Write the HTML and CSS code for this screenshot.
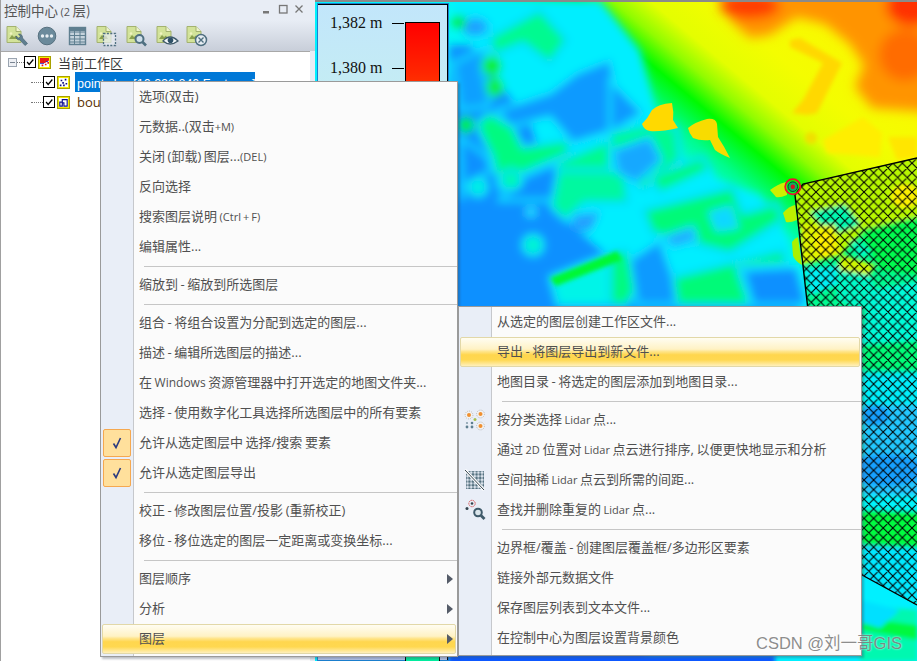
FILE: index.html
```html
<!DOCTYPE html>
<html>
<head>
    <meta charset="UTF-8">
    <title>控制中心</title>
    <link rel="stylesheet" href="styles.css">
</head>
<body>
<svg class="defs" width="0" height="0">
    <defs>
        <symbol id="doc" viewBox="0 0 30 24">
            <path d="M5 2.500h9l5 5v11H5z" fill="#d3e39a" stroke="#a3b26f"/>
            <path d="M14 2.500v5h5" fill="#eef4cc" stroke="#a3b26f"/>
            <path d="M7 15l3-4 2 2 2-1.500 2 3.500z" fill="#8aa04e"/>
            <circle cx="9" cy="9.500" r="1.300" fill="#f0f4c0"/>
        </symbol>
    </defs>
</svg>

<div class="panel">
    <div class="panel-title">
        <span class="panel-name">控制中心 <small>(2</small> 层)</span>
        <span class="win-btns">
            <svg width="50" height="12" viewBox="0 0 50 12">
                <rect x="3" y="7" width="6" height="2.500" fill="#777"/>
                <rect x="19.500" y="1.500" width="7.500" height="7.500" fill="none" stroke="#777" stroke-width="1.300"/>
                <path d="M35.500 1.500l7 7M42.500 1.500l-7 7" stroke="#777" stroke-width="1.300"/>
            </svg>
        </span>
    </div>
    <div class="toolbar">
        <svg class="tool" viewBox="0 0 30 24"><use href="#doc"/><path d="M14 12a3.500 3.500 0 0 0 4 4l5 5.500 2.500-2-5-5.500a3.500 3.500 0 0 0-4-4l2 2.500-2 1.500z" fill="#5f7f90" stroke="#3f5a6a" stroke-width=".6"/></svg>
        <svg class="tool" viewBox="0 0 30 24"><circle cx="15" cy="12" r="8.800" fill="#6b8a9b" stroke="#56707f"/><circle cx="10.500" cy="12" r="1.700" fill="#e8eef2"/><circle cx="15" cy="12" r="1.700" fill="#e8eef2"/><circle cx="19.500" cy="12" r="1.700" fill="#e8eef2"/></svg>
        <svg class="tool" viewBox="0 0 30 24"><rect x="7.500" y="3.500" width="16" height="17" fill="#c5d3dc" stroke="#5f7f90" stroke-width="1.400"/><path d="M8 8h15M8 11.500h15M8 15h15M8 18h15M12.500 7v13M18 7v13" stroke="#5f7f90"/><rect x="8" y="4" width="15" height="3" fill="#5f7f90"/></svg>
        <svg class="tool" viewBox="0 0 30 24"><use href="#doc"/><rect x="11.500" y="9.500" width="12" height="12" fill="#e8ecf2" fill-opacity=".7" stroke="#4f6f80" stroke-width="1.300" stroke-dasharray="2 1.400"/></svg>
        <svg class="tool" viewBox="0 0 30 24"><use href="#doc"/><circle cx="17.500" cy="15" r="4" fill="#cfe0ea" stroke="#4f6f80" stroke-width="2"/><path d="M20.500 18l3.500 3.500" stroke="#4f6f80" stroke-width="2.600"/></svg>
        <svg class="tool" viewBox="0 0 30 24"><use href="#doc"/><path d="M11 17q7-8 15 0q-8 6-15 0z" fill="#f4f8fa" stroke="#3f5a6a" stroke-width="1.300"/><circle cx="18.500" cy="16.300" r="2.800" fill="#2f5168"/></svg>
        <svg class="tool" viewBox="0 0 30 24"><use href="#doc"/><circle cx="19" cy="16" r="5.500" fill="#e6edf2" stroke="#4f6f80" stroke-width="1.500"/><path d="M16.500 13.500l5 5M21.500 13.500l-5 5" stroke="#4f6f80" stroke-width="1.400"/></svg>
    </div>
    <div class="tree">
        <div class="tree-row">
            <span class="expander"></span>
            <span class="dots-h short"></span>
            <span class="check"><svg width="12" height="12" viewBox="0 0 12 12"><path d="M2.500 6l2.500 3 5-6" fill="none" stroke="#000" stroke-width="1.500"/></svg></span>
            <span class="layer-icon">
                <svg viewBox="0 0 11 11"><rect width="11" height="11" fill="#fff"/><path d="M0 0h11v3L6 6H0z" fill="#e81818"/><path d="M6 7h2v2H6zM9 5h2v2H9zM2 8h2v2H2z" fill="#e81818"/><path d="M0 6h5v1H0zM7 4h3v1H7z" fill="#1818c8"/></svg>
            </span>
            <span class="tree-text first">当前工作区</span>
        </div>
        <div class="tree-row child">
            <span class="dots-h"></span>
            <span class="check"><svg width="12" height="12" viewBox="0 0 12 12"><path d="M2.500 6l2.500 3 5-6" fill="none" stroke="#000" stroke-width="1.500"/></svg></span>
            <span class="layer-icon">
                <svg viewBox="0 0 11 11"><rect width="11" height="11" fill="#fff"/><path d="M2 2h2v2H2zM7 1h2v2H7zM4 5h2v2H4zM8 6h2v2H8zM1 8h2v2H1zM5 8h2v2H5z" fill="#101080"/></svg>
            </span>
            <span class="tree-text selected">points.las [10,222,240 Features]</span>
        </div>
        <div class="tree-row child">
            <span class="dots-h"></span>
            <span class="check"><svg width="12" height="12" viewBox="0 0 12 12"><path d="M2.500 6l2.500 3 5-6" fill="none" stroke="#000" stroke-width="1.500"/></svg></span>
            <span class="layer-icon">
                <svg viewBox="0 0 11 11"><rect width="11" height="11" fill="#fff"/><path d="M1 10V5h3V2h6v8H6V6H4v4z" fill="none" stroke="#101090" stroke-width="1.400"/></svg>
            </span>
            <span class="tree-text">boundary</span>
        </div>
    </div>
</div>

<div class="map">
    <svg class="map-art" viewBox="315 0 602 661" width="602" height="661">
        <defs>
            <linearGradient id="slope" gradientUnits="userSpaceOnUse" x1="572" y1="259" x2="828" y2="-49">
                <stop offset="0" stop-color="#00f0ff"/>
                <stop offset=".34" stop-color="#00fbf0"/>
                <stop offset=".42" stop-color="#00fc90"/>
                <stop offset=".5" stop-color="#00fa00"/>
                <stop offset=".56" stop-color="#90fc00"/>
                <stop offset=".62" stop-color="#e4fe00"/>
                <stop offset=".72" stop-color="#f4fd00"/>
                <stop offset="1" stop-color="#fff400"/>
            </linearGradient>
            <pattern id="hatch" patternUnits="userSpaceOnUse" width="9.600" height="9.600">
                <path d="M0 9.600L9.600 0M-1 1L1 -1M8.600 10.600L10.600 8.600M0 0L9.600 9.600M-1 8.600L1 10.600M8.600 -1L10.600 1" stroke="#000" stroke-width="1.100"/>
            </pattern>
            <filter id="soft" x="-10%" y="-10%" width="120%" height="120%"><feGaussianBlur stdDeviation="4"/></filter>
            <filter id="crisp" x="-10%" y="-10%" width="120%" height="120%"><feGaussianBlur stdDeviation="2"/></filter>
            <filter id="softer" x="-30%" y="-30%" width="160%" height="160%"><feGaussianBlur stdDeviation="6"/></filter>
            <filter id="edge" x="-10%" y="-10%" width="120%" height="120%"><feGaussianBlur stdDeviation=".5"/></filter>
        </defs>

        <rect x="315" y="0" width="602" height="661" fill="url(#slope)"/>

        <g filter="url(#softer)">
            <path d="M712 -15L732 22L750 38L770 35L797 17L825 24L850 44L864 65L855 87L872 108L930 112L930 -15z" fill="#ff9400"/>
            <ellipse cx="750" cy="6" rx="30" ry="13" fill="#ff3c00"/>
            <ellipse cx="912" cy="6" rx="26" ry="20" fill="#ff3000"/>
            <ellipse cx="905" cy="55" rx="26" ry="26" fill="#ff6c00"/>
            <path d="M600 60L650 125L600 145z" fill="#0a90ff"/>
        </g>

        <g filter="url(#soft)" stroke="#10dcff" stroke-width="4">
            <path d="M449 45L610 45L650 130L700 250L760 270L800 310L640 670L449 670z" fill="#0f90ff" stroke="none"/>
            <path d="M449 0H600L640 50L660 125L690 170L760 195L790 240L790 262L650 290L560 215L530 120L480 60z" fill="#00eeff" stroke="none"/>
            <ellipse cx="475" cy="27" rx="14" ry="10" fill="#1aa0ff"/>
            <path d="M490 37L540 10L567 40L550 63L523 43L493 55z" fill="#00fa90"/>
            <path d="M453 63L487 47L482 67L490 100L487 107L460 110z" fill="#0fa0ff"/>
            <path d="M497 110L550 93L577 73L610 60L625 127L573 143L550 117L510 127z" fill="#0f9aff"/>
            <path d="M610 80L643 113L610 133z" fill="#0f9aff"/>
            <ellipse cx="492" cy="66" rx="10" ry="10" fill="#10f030" stroke="none"/>
            <ellipse cx="495" cy="87" rx="9" ry="10" fill="#10f040" stroke="none"/>
            <circle cx="459" cy="22" r="7" fill="#00f040" stroke="none"/>
            <path d="M477 123L490 113L513 127L523 147L567 140L570 153L523 173L520 183L500 190L492 157L480 133z" fill="#00fa80"/>
            <circle cx="466" cy="125" r="8" fill="#00f030" stroke="none"/>
            <path d="M460 137L487 157L492 170L463 187L463 200z" fill="#1090ff"/>
            <path d="M523 177L557 163L560 200L500 200z" fill="#1090ff"/>
            <path d="M555 163L610 140L610 200L563 200z" fill="#00fa90"/>
            <circle cx="478" cy="187" r="9" fill="#00f0e0"/>
            <ellipse cx="511" cy="180" rx="11" ry="10" fill="#00f8b0"/>
            <circle cx="531" cy="212" r="6" fill="#20d8ff" stroke="none"/>
            <circle cx="533" cy="245" r="10" fill="#00f4d0"/>
            <path d="M558 170L625 170L628 203L585 203L565 220L551 207z" fill="#00f8a0"/>
            <path d="M575 215L600 212L590 232L570 228z" fill="#20a0ff" stroke="none"/>
            <path d="M550 277L618 250L628 267L628 305L558 305z" fill="#00f4e8"/>
            <path d="M610 253L627 250L637 287L627 305L610 305z" fill="#00fa80"/>
            <path d="M610 133L653 123L677 127L680 160L643 190L610 160z" fill="#00fa90"/>
            <path d="M613 150L650 137L662 160L637 183L617 173z" fill="#18a8ff"/>
            <path d="M650 177L703 157L710 170L660 193z" fill="#00fa80"/>
            <path d="M660 193L710 170L720 183L670 207z" fill="#00eeff" stroke="none"/>
            <path d="M643 210L733 187L743 213L777 203L783 220L730 253L652 233z" fill="#00fa78"/>
            <path d="M710 213L730 207L737 227L717 230z" fill="#10d8ff"/>
            <path d="M663 237L693 227L697 240L673 248z" fill="#20a8ff"/>
            <path d="M630 260L660 240L673 277L677 305L637 305z" fill="#0f9aff"/>
            <path d="M673 277L783 250L787 263L737 267L750 305L677 305z" fill="#00fa78"/>
            <path d="M743 270L797 267L807 305L753 305z" fill="#0f90ff"/>
        </g>

        <path d="M550 278L617 251L622 260L556 286z" fill="#00f830" filter="url(#crisp)"/>

        <g filter="url(#crisp)">
            <path d="M790 40L800 38L842 63L817 113L807 115L792 113L803 100L823 63L790 47z" fill="#ffd800"/>
            <path d="M823 140L863 117L882 133L880 157L827 153z" fill="#ffee00"/>
            <path d="M888 137L917 137L917 157L897 160z" fill="#ffe600"/>
            <circle cx="811" cy="138" r="6" fill="#f0e000"/>
        </g>

        <!-- polygon contents under the hatch -->
        <clipPath id="boundary"><path d="M803 184L925 156L925 610L862 575L808 310L795 195z"/></clipPath>
        <g clip-path="url(#boundary)">
            <rect x="790" y="150" width="135" height="470" fill="#00fa90"/>
            <g filter="url(#crisp)">
                <path d="M795 180L925 150L925 215L860 235L840 255L795 225z" fill="#b8f800"/>
                <ellipse cx="905" cy="196" rx="14" ry="12" fill="#fcf000"/>
                <path d="M810 212L845 205L860 225L830 235z" fill="#00f8b0"/>
                <path d="M800 225L835 225L842 255L800 265z" fill="#e0f400"/>
                <ellipse cx="825" cy="243" rx="10" ry="13" fill="#fff000"/>
                <path d="M842 255L875 265L862 290L835 270z" fill="#d0f400"/>
                <path d="M803 268L840 266L838 285L810 295z" fill="#00f0f4"/>
                <path d="M835 270L870 275L880 300L860 310L838 300z" fill="#00fac8"/>
                <path d="M860 230L925 215L925 275L880 270z" fill="#00fc50"/>
                <path d="M850 240L872 250L860 258z" fill="#00f8c8"/>
                <path d="M870 290L925 280L925 350L860 345z" fill="#00fad8"/>
                <path d="M862 345L925 340L925 370L862 368z" fill="#00fc78"/>
                <path d="M862 372L925 372L925 405L862 405z" fill="#00f0fc"/>
                <path d="M862 405L925 405L925 600L862 600z" fill="#20c8ff"/>
                <ellipse cx="885" cy="470" rx="40" ry="16" fill="#18a0ff"/>
                <ellipse cx="875" cy="415" rx="14" ry="10" fill="#18a0ff"/>
                <path d="M862 495L925 495L925 512L862 512z" fill="#00f4fc"/>
                <path d="M862 510L925 512L925 548L862 545z" fill="#00fc40"/>
                <path d="M862 548L925 548L925 610L862 575z" fill="#00e8ff"/>
            </g>
            <rect x="790" y="150" width="135" height="470" fill="url(#hatch)"/>
        </g>
        <path d="M917 158L803 184L795 195L808 310M862 575L917 605" fill="none" stroke="#000" stroke-width="1.400"/>

        <g filter="url(#crisp)">
            <path d="M862 605L917 610V661H860z" fill="#00f8b0"/>
            <path d="M862 618L917 625V640L862 630z" fill="#00f840"/>
            <path d="M860 600L900 610L880 628L860 622z" fill="#00e0ff"/>
            <path d="M449 655H775V670H449z" fill="#0858ff"/>
        </g>

        <g filter="url(#edge)">
            <path d="M642 124Q648 118 652 110Q658 104 672 103Q674 112 673 120L678 128Q660 132 650 131Q644 130 642 124z" fill="#ffd900"/>
            <path d="M688 128Q695 122 707 119Q716 118 717 124L718 137Q724 146 730 158Q720 154 715 150L710 140Q700 141 693 138Q689 133 688 128z" fill="#f8dc00"/>
            <path d="M770 190Q778 184 786 182L787 195Q780 198 776 197z" fill="#ccf000"/>
            <path d="M783 213Q789 206 795 205L797 220Q790 223 786 222z" fill="#bcf000"/>
            <path d="M792 242Q795 238 798 237L802 265Q796 262 793 256z" fill="#aaf000"/>
        </g>

        <g fill="none">
            <circle cx="792.800" cy="186.700" r="7.600" stroke="#f01030" stroke-width="1.800"/>
            <circle cx="792.800" cy="186.700" r="4.800" fill="#10b060" stroke="#104030" stroke-width="1"/>
            <circle cx="792.800" cy="186.700" r="2.200" fill="#d81020"/>
        </g>
    </svg>
    <div class="legend">
        <div class="legend-row"><span class="legend-label">1,382 m</span><span class="legend-tick"></span></div>
        <div class="legend-row"><span class="legend-label">1,380 m</span><span class="legend-tick"></span></div>
        <div class="legend-bar"></div>
    </div>
</div>

<div class="menu main-menu">
    <div class="item"><span class="gutter"></span><span class="label">选项(双击)</span></div>
    <div class="item"><span class="gutter"></span><span class="label">元数据..(双击<span class="sm">+M)</span></span></div>
    <div class="item"><span class="gutter"></span><span class="label">关闭 (卸载) 图层...<span class="sm">(DEL)</span></span></div>
    <div class="item"><span class="gutter"></span><span class="label">反向选择</span></div>
    <div class="item"><span class="gutter"></span><span class="label">搜索图层说明 <span class="sm">(Ctrl + F)</span></span></div>
    <div class="item"><span class="gutter"></span><span class="label">编辑属性...</span></div>
    <div class="sep"></div>
    <div class="item"><span class="gutter"></span><span class="label">缩放到 - 缩放到所选图层</span></div>
    <div class="sep"></div>
    <div class="item"><span class="gutter"></span><span class="label">组合 - 将组合设置为分配到选定的图层...</span></div>
    <div class="item"><span class="gutter"></span><span class="label">描述 - 编辑所选图层的描述...</span></div>
    <div class="item"><span class="gutter"></span><span class="label">在 <span class="md">Windows</span> 资源管理器中打开选定的地图文件夹...</span></div>
    <div class="item"><span class="gutter"></span><span class="label">选择 - 使用数字化工具选择所选图层中的所有要素</span></div>
    <div class="item"><span class="gutter"><span class="tick"><svg width="12" height="14" viewBox="0 0 12 14"><path d="M2.500 7.500l2.500 4L9.500 2" fill="none" stroke="#2a3a80" stroke-width="1.600"/></svg></span></span><span class="label">允许从选定图层中 选择/搜索 要素</span></div>
    <div class="item"><span class="gutter"><span class="tick"><svg width="12" height="14" viewBox="0 0 12 14"><path d="M2.500 7.500l2.500 4L9.500 2" fill="none" stroke="#2a3a80" stroke-width="1.600"/></svg></span></span><span class="label">允许从选定图层导出</span></div>
    <div class="sep"></div>
    <div class="item"><span class="gutter"></span><span class="label">校正 - 修改图层位置/投影 (重新校正)</span></div>
    <div class="item"><span class="gutter"></span><span class="label">移位 - 移位选定的图层一定距离或变换坐标...</span></div>
    <div class="sep"></div>
    <div class="item"><span class="gutter"></span><span class="label">图层顺序</span><span class="arrow"></span></div>
    <div class="item"><span class="gutter"></span><span class="label">分析</span><span class="arrow"></span></div>
    <div class="item active"><span class="gutter"></span><span class="label">图层</span><span class="arrow"></span></div>
</div>

<div class="menu sub-menu">
    <div class="item"><span class="gutter"></span><span class="label">从选定的图层创建工作区文件...</span></div>
    <div class="item active"><span class="gutter"></span><span class="label">导出 - 将图层导出到新文件...</span></div>
    <div class="item"><span class="gutter"></span><span class="label">地图目录 - 将选定的图层添加到地图目录...</span></div>
    <div class="sep"></div>
    <div class="item">
        <span class="gutter">
            <svg width="22" height="22" viewBox="0 0 22 22">
                <g fill="#f2f2f2" stroke="#aaa" stroke-width=".8" stroke-dasharray="1 1"><circle cx="5" cy="6" r="3.900"/><circle cx="16.500" cy="5" r="3.900"/><circle cx="16.500" cy="17" r="3.900"/></g>
                <circle cx="5" cy="6" r="2" fill="#f09030"/><circle cx="16.500" cy="5" r="2" fill="#f09030"/><circle cx="16.500" cy="17" r="2" fill="#f09030"/>
                <circle cx="11" cy="10.500" r="1.500" fill="#a8c050"/><circle cx="8" cy="14" r="1.300" fill="#5f7f90"/><circle cx="3" cy="18" r="1.400" fill="#5f7f90"/><circle cx="8" cy="18" r="1.400" fill="#5f7f90"/><circle cx="3" cy="14" r="1.100" fill="#8aa0ae"/>
            </svg>
        </span>
        <span class="label">按分类选择 <span class="sm">Lidar</span> 点...</span>
    </div>
    <div class="item"><span class="gutter"></span><span class="label">通过 <span class="sm">2D</span> 位置对 <span class="sm">Lidar</span> 点云进行排序, 以便更快地显示和分析</span></div>
    <div class="item">
        <span class="gutter">
            <svg width="22" height="22" viewBox="0 0 22 22">
                <pattern id="grid-dots" patternUnits="userSpaceOnUse" width="3.600" height="3.600"><circle cx="1.800" cy="1.800" r="1.500" fill="#54717f"/></pattern>
                <path d="M2 2h18v18H2z" fill="url(#grid-dots)"/>
                <path d="M1 1L20 21" stroke="#fff" stroke-width="2.800"/>
                <path d="M1 1L20 21" stroke="#33434d" stroke-width="1"/>
            </svg>
        </span>
        <span class="label">空间抽稀 <span class="sm">Lidar</span> 点云到所需的间距...</span>
    </div>
    <div class="item">
        <span class="gutter">
            <svg width="22" height="22" viewBox="0 0 22 22">
                <circle cx="8" cy="4.500" r="3.200" fill="none" stroke="#d02020" stroke-width=".9" stroke-dasharray="1.200 1"/>
                <circle cx="8" cy="4.500" r="1.300" fill="#33434d"/>
                <circle cx="3" cy="9.500" r="1.500" fill="#33434d"/>
                <circle cx="14" cy="13.500" r="3.800" fill="#dbe6ec" stroke="#3f5a6a" stroke-width="2"/>
                <path d="M17 16.500l3.500 3.500" stroke="#3f5a6a" stroke-width="2.800"/>
            </svg>
        </span>
        <span class="label">查找并删除重复的 <span class="sm">Lidar</span> 点...</span>
    </div>
    <div class="sep"></div>
    <div class="item"><span class="gutter"></span><span class="label">边界框/覆盖 - 创建图层覆盖框/多边形区要素</span></div>
    <div class="item"><span class="gutter"></span><span class="label">链接外部元数据文件</span></div>
    <div class="item"><span class="gutter"></span><span class="label">保存图层列表到文本文件...</span></div>
    <div class="item"><span class="gutter"></span><span class="label">在控制中心为图层设置背景颜色</span></div>
</div>

<div class="watermark">CSDN @刘一哥GIS</div>
</body>
</html>
```

FILE: styles.css
```css
html, body {
    height: 100%;
}
body {
    display: flex;
    margin: 0;
    overflow: hidden;
    background-color: #c9ced8;
    font-family: "Open Sans", "Noto Sans CJK SC", sans-serif;
    font-size: 13px;
}
.defs {
    position: absolute;
}

/* left panel */
.panel {
    display: flex;
    flex-direction: column;
    flex: none;
    width: 315px;
    box-sizing: border-box;
    padding-left: 1px;
    background-color: #e8edf5;
    box-shadow: inset 1px 0 0 #a0a0a0;
}
.panel-title {
    display: flex;
    align-items: center;
    justify-content: space-between;
    flex: none;
    height: 20px;
    padding: 0 5px 0 3px;
    color: #555;
    font-family: "Noto Sans CJK SC", sans-serif;
    font-size: 13.5px;
    word-spacing: -0.5px;
}
.panel-name small {
    font-family: "Open Sans", sans-serif;
    font-size: 11px;
}
.win-btns {
    display: flex;
}
.toolbar {
    display: flex;
    flex: none;
    height: 31px;
    box-sizing: border-box;
    padding: 4px 0 0 1px;
    background: linear-gradient(#e8edf5, #c8ced9);
}
.tool {
    flex: none;
    width: 30px;
    height: 24px;
}
.tree {
    flex: 1;
    margin-right: 5px;
    background-color: #fff;
    border-top: 1px solid #a8a8a8;
}
.tree-row {
    display: flex;
    align-items: center;
    height: 20px;
    padding-left: 7px;
    color: #222;
    white-space: nowrap;
}
.tree-row.child {
    padding-left: 30px;
}
.expander {
    flex: none;
    width: 9px;
    height: 9px;
    box-sizing: border-box;
    border: 1px solid #9aa4b0;
    background: linear-gradient(#7a8592, #7a8592) center / 5px 1px no-repeat, #eef0f4;
}
.dots-h {
    flex: none;
    width: 12px;
    border-top: 1px dotted #777;
}
.dots-h.short {
    width: 7px;
}
.check {
    display: flex;
    flex: none;
    width: 12px;
    height: 12px;
    box-sizing: border-box;
    border: 1px solid #000;
    align-items: center;
    justify-content: center;
    background-color: #fff;
}
.layer-icon {
    display: flex;
    flex: none;
    margin-left: 2px;
    padding: 1px;
    border: 1px solid #a8a000;
    background-color: #f4ec00;
}
.layer-icon svg {
    width: 9px;
    height: 9px;
}
.tree-text {
    margin-left: 5px;
    padding: 0 2px;
    color: #5a3000;
}
.tree-text.first {
    color: #3a3a3a;
}
.tree-text.selected {
    width: 176px;
    height: 20px;
    overflow: hidden;
    line-height: 25px;
    background-color: #0078d7;
    color: #fff;
    font-family: "Liberation Sans", sans-serif;
    font-size: 12.5px;
}

/* map */
.map {
    position: relative;
    flex: 1;
    overflow: hidden;
    border-top: 2px solid #8a8a8a;
    background-color: #9a9a9a;
}
.map-art {
    position: absolute;
    top: -2px;
    left: 0;
    display: block;
}
.legend {
    position: absolute;
    top: 1px;
    bottom: 0;
    left: 2px;
    width: 132px;
    padding-top: 8px;
    box-sizing: border-box;
    border: solid #000;
    border-width: 2px 2px 0 1px;
    outline: 1px solid #1a80d0;
    outline-offset: -1px;
    background: linear-gradient(#c2e6fb 0, #c4ecf4 80px, #b8c8ee 100%);
}
.legend-row {
    display: flex;
    align-items: center;
    height: 20px;
    margin-bottom: 25px;
    color: #111;
    font-family: "Liberation Serif", serif;
    font-size: 16px;
}
.legend-label {
    width: 62px;
    margin-left: 12px;
    white-space: nowrap;
}
.legend-tick {
    width: 12px;
    border-top: 1px solid #000;
}
.legend-bar {
    position: absolute;
    top: 17px;
    bottom: 0;
    left: 87px;
    width: 33px;
    border: solid #000;
    border-width: 1px 1px 0;
    background: linear-gradient(#ff0000 0, #ff2600 50px, #ff9000 150px, #e0ff00 300px, #00f0a0 100%);
}

/* context menus */
.menu {
    position: absolute;
    display: flex;
    flex-direction: column;
    box-sizing: border-box;
    border: 1px solid #9a9a9a;
    box-shadow: 2px 2px 2px rgba(60, 70, 90, 0.35);
    background: linear-gradient(to right, #e9eef7 32px, #c6c8cc 32px, #c6c8cc 33px, #fbfbfb 33px);
    color: #505050;
}
.main-menu {
    top: 81px;
    left: 100px;
    width: 358px;
    height: 576px;
}
.sub-menu {
    top: 306px;
    left: 458px;
    width: 404px;
    height: 350px;
}
.item {
    display: flex;
    align-items: center;
    flex: none;
    height: 30px;
    white-space: nowrap;
}
.gutter {
    display: flex;
    align-items: center;
    justify-content: center;
    flex: none;
    width: 32px;
    height: 30px;
}
.label {
    margin: 0 0 3px 6px;
    word-spacing: -0.8px;
}
.sm {
    font-size: 11px;
}
.md {
    font-size: 12px;
}
.sep {
    flex: none;
    height: 1px;
    margin: 4px 0 3px 43px;
    background-color: #c6c6c6;
}
.tick {
    display: flex;
    align-items: center;
    justify-content: center;
    flex: none;
    width: 28px;
    height: 28px;
    box-sizing: border-box;
    border: 1px solid #f5a850;
    border-radius: 2px;
    background-color: #ffe09c;
}
.arrow {
    width: 0;
    height: 0;
    margin-left: auto;
    margin-right: 4px;
    border-top: 5px solid transparent;
    border-bottom: 5px solid transparent;
    border-left: 6px solid #555c68;
}
.item.active {
    margin: 0 1px;
    box-sizing: border-box;
    border: 1px solid #e2d8a8;
    border-radius: 2px;
    background: linear-gradient(#fffdf2 0, #fff2c4 40%, #ffe58c 48%, #ffd64e 60%, #ffd850 78%, #fff0bc 100%);
}
.item.active .gutter {
    width: 30px;
}
.item.active .arrow {
    margin-right: 2px;
}

.watermark {
    position: absolute;
    right: 15px;
    bottom: 7px;
    color: rgba(110, 110, 110, 0.8);
    font-family: "Liberation Sans", "Noto Sans CJK SC", sans-serif;
    font-size: 16.5px;
    text-shadow: 0 0 2px #fff;
}
```
